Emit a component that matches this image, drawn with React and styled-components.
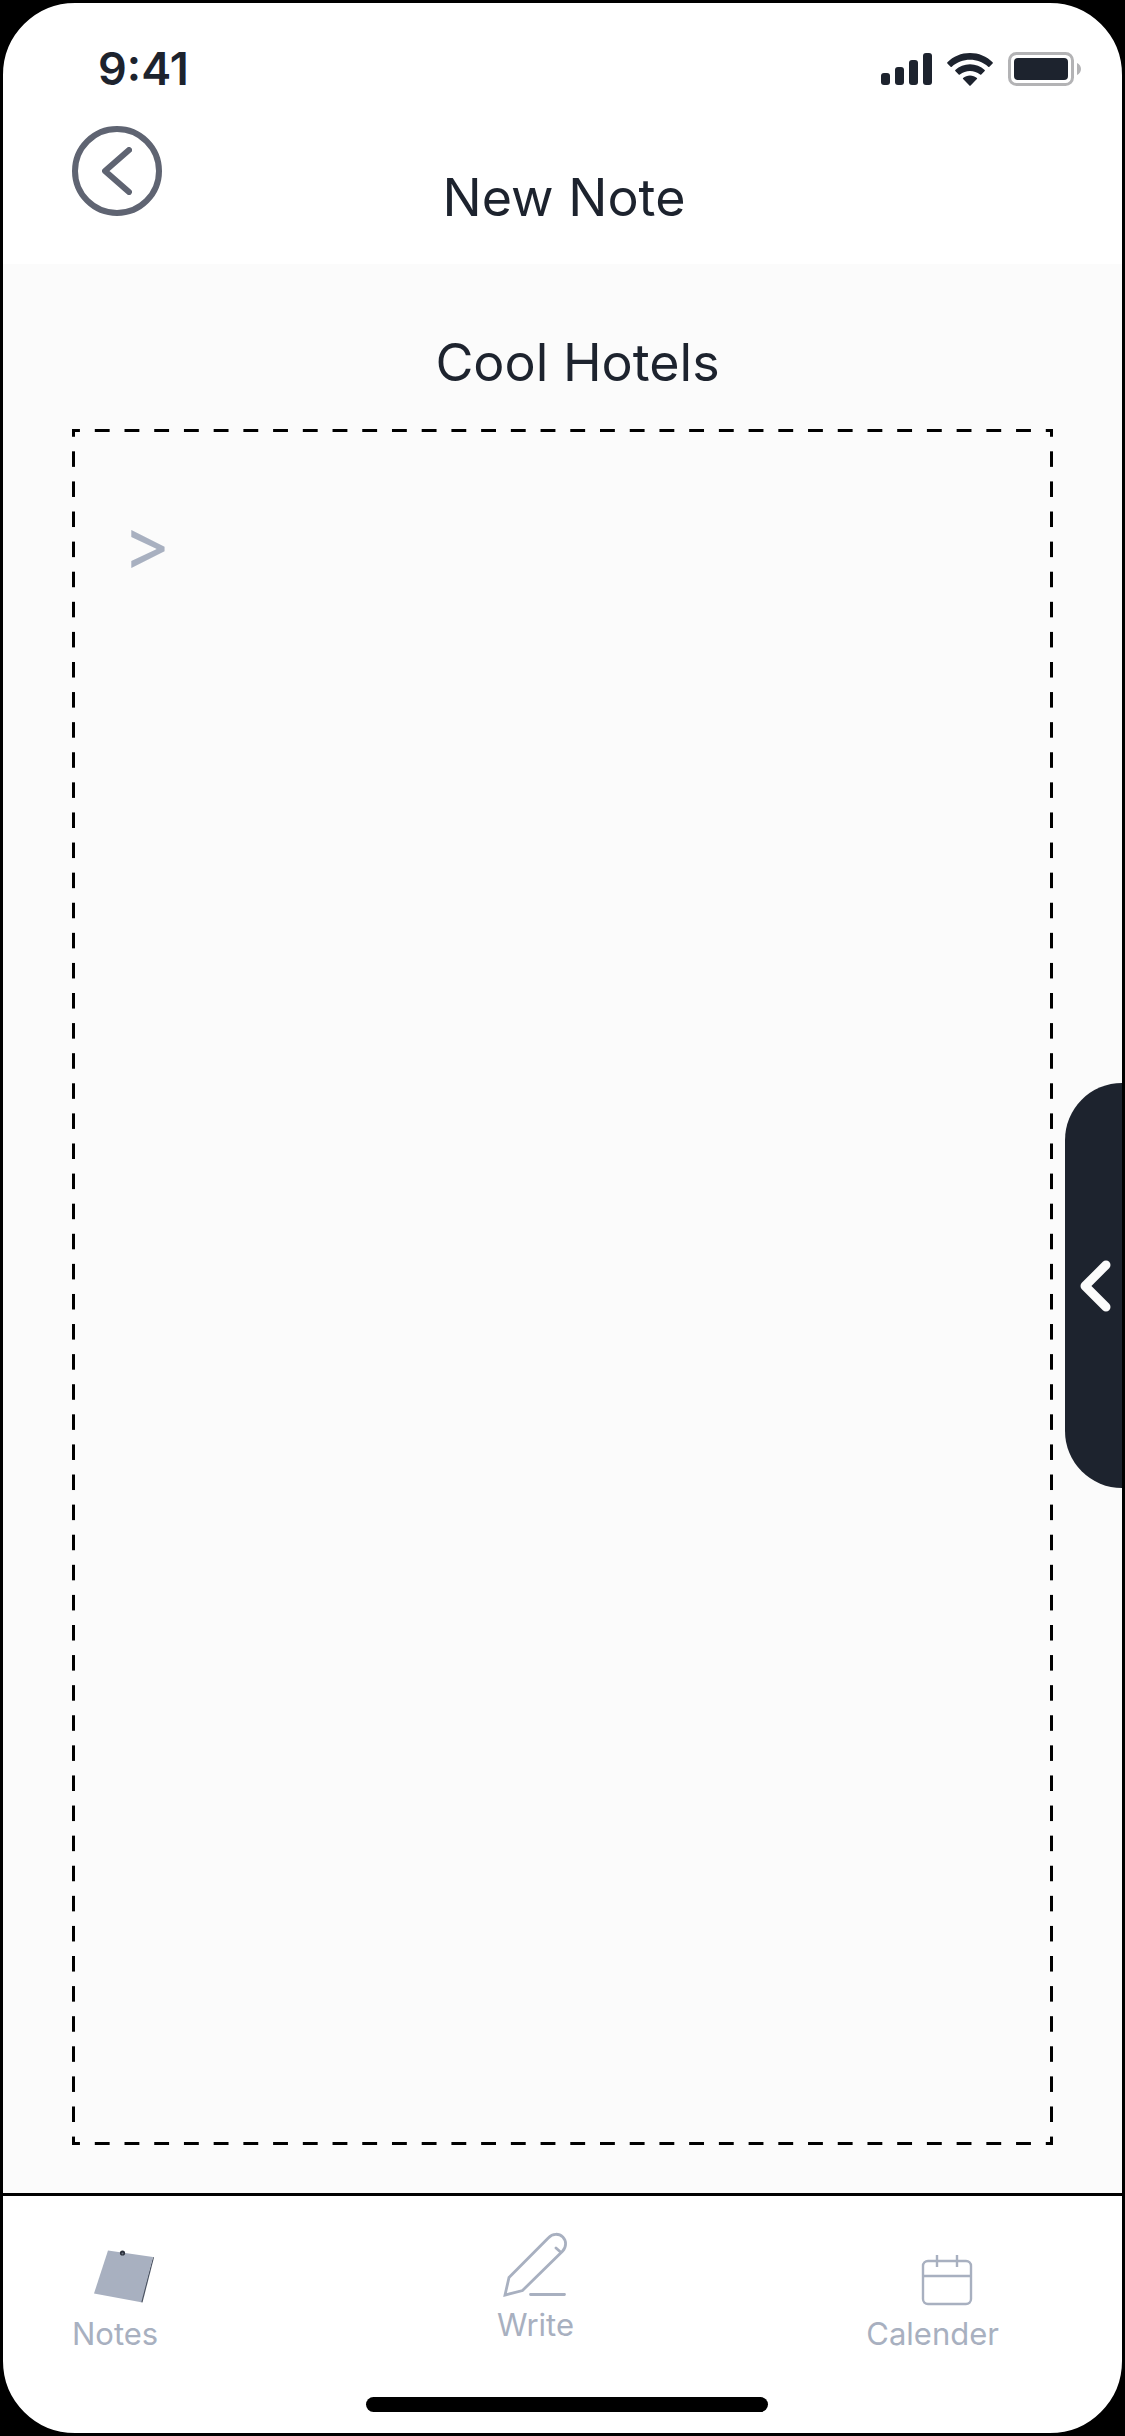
import React from 'react';
import styled, { createGlobalStyle } from 'styled-components';

function SignalIcon() {
  return (
    <svg width="51" height="32" viewBox="0 0 51 32" fill="currentColor" aria-hidden="true">
      <rect x="0" y="20" width="9" height="12" rx="3" />
      <rect x="14" y="14" width="9" height="18" rx="3" />
      <rect x="28" y="7" width="9" height="25" rx="3" />
      <rect x="42" y="0" width="9" height="32" rx="3" />
    </svg>
  );
}

function WifiIcon() {
  return (
    <svg width="46" height="33" viewBox="0 0 46 33" fill="currentColor" aria-hidden="true">
      <path d="M23 0C31.600 0 39.800 3.300 45.600 9.300Q46.100 9.900 45.600 10.400L42.400 13.800Q41.800 14.300 41.200 13.800C36 9 29.700 6.800 23 6.800S10 9 4.800 13.800Q4.200 14.300 3.600 13.800L.4 10.400Q-.1 9.900.4 9.300C6.200 3.300 14.400 0 23 0Z" />
      <path d="M23 11.200C28.600 11.200 33.700 13.300 37.700 17Q38.200 17.600 37.700 18.100L34.300 21.500Q33.700 22 33.100 21.500C30.200 19.200 26.700 17.900 23 17.900S15.800 19.200 12.900 21.500Q12.300 22 11.700 21.500L8.300 18.100Q7.800 17.600 8.300 17C12.300 13.300 17.400 11.200 23 11.200Z" />
      <path d="M23 22.400C25.600 22.400 28 23.300 29.900 24.900Q30.400 25.500 29.900 26L23.600 32.600Q23 33.200 22.400 32.600L16.100 26Q15.600 25.500 16.100 24.900C18 23.300 20.400 22.400 23 22.400Z" />
    </svg>
  );
}

function BatteryIcon() {
  return (
    <svg width="73" height="34" viewBox="0 0 73 34" aria-hidden="true">
      <rect x="1.5" y="1.5" width="63" height="31" rx="7" fill="none" stroke="#b3b3b5" strokeWidth="3" />
      <rect x="6" y="6" width="54" height="22" rx="4" fill="currentColor" />
      <path d="M69 11C71.500 12.200 73 14.500 73 17S71.500 21.800 69 23Z" fill="#b3b3b5" />
    </svg>
  );
}

function NotesIcon() {
  return (
    <svg width="84" height="72" viewBox="0 0 84 72" aria-hidden="true">
      <path d="M80 22L81 22.500 69.500 67.500 67.500 67Z" fill="#4b5362" />
      <path d="M35 15.500L80 22 68.300 67.200 21 58.500Z" fill="#a8b0c0" />
      <circle cx="49.500" cy="18" r="2.600" fill="#2b303b" />
      <circle cx="49.500" cy="18.500" r="1" fill="#6d7482" />
    </svg>
  );
}

function WriteIcon() {
  return (
    <svg width="72" height="72" viewBox="0 0 72 72" fill="none" stroke="currentColor" strokeWidth="2.800" strokeLinecap="round" aria-hidden="true">
      <path d="M6 69L10 51.500 49.500 11.700C53.500 7.200 60 7.300 63.800 11C67.500 14.800 67.600 21 63.500 25.200L23.500 64.500Z" />
      <path d="M57 22L61.500 26M31.500 68.500H65.500" />
    </svg>
  );
}

function CalendarIcon() {
  return (
    <svg width="102" height="72" viewBox="0 0 102 72" fill="none" stroke="currentColor" strokeWidth="2.400" aria-hidden="true">
      <rect x="41" y="26" width="48" height="43" rx="5" />
      <path d="M41 41H89M55 20V32M75 20V32" />
    </svg>
  );
}

function App() {
  return (
    <>
      <GlobalStyle />
      <Screen>
        <Header>
          <StatusBar>
            <Time>9:41</Time>
            <StatusIcons>
              <SignalIcon />
              <WifiIcon />
              <BatteryIcon />
            </StatusIcons>
          </StatusBar>
          <TitleBar>
            <BackButton type="button" aria-label="Back">
              <svg width="30" height="48" viewBox="0 0 30 48" aria-hidden="true">
                <path d="M27 3L3 24 27 45" />
              </svg>
            </BackButton>
            <PageTitle>New Note</PageTitle>
          </TitleBar>
        </Header>

        <Main>
          <NoteTitle id="note-title">Cool Hotels</NoteTitle>
          <NoteArea aria-labelledby="note-title" placeholder=">" />
          <DrawerHandle type="button" aria-label="Open drawer">
            <svg width="33" height="54" viewBox="0 0 33 54" aria-hidden="true">
              <path d="M26 6L5 27 26 48" />
            </svg>
          </DrawerHandle>
        </Main>

        <Footer>
          <TabBar>
            <Tab href="#notes" $align="start">
              <NotesIcon />
              Notes
            </Tab>
            <Tab href="#write" $align="center" $raised>
              <WriteIcon />
              Write
            </Tab>
            <Tab href="#calender" $align="end">
              <CalendarIcon />
              Calender
            </Tab>
          </TabBar>
          <HomeIndicator />
        </Footer>
      </Screen>
    </>
  );
}

const GlobalStyle = createGlobalStyle`
  *, *::before, *::after {
    box-sizing: border-box;
  }

  body {
    margin: 0;
    background: #000;
    color: #1d232e;
    font-family: Inter, 'Liberation Sans', sans-serif;
  }

  button {
    padding: 0;
    cursor: pointer;
  }

  svg {
    display: block;
    flex-shrink: 0;
  }
`;

const Screen = styled.div`
  min-height: 100vh;
  display: flex;
  flex-direction: column;
  overflow: hidden;
  border: 3px solid #000;
  border-radius: 75px;
  background: #fff;
  box-shadow: 0 0 0 75px #000;
`;

const Header = styled.header`
  padding-bottom: 33px;
`;

const StatusBar = styled.div`
  display: flex;
  justify-content: space-between;
  align-items: center;
  padding: 39px 41px 0 95px;
`;

const Time = styled.span`
  font-size: 45px;
  font-weight: 600;
  line-height: 54px;
`;

const StatusIcons = styled.div`
  display: flex;
  align-items: center;
  gap: 15px;
`;

const TitleBar = styled.div`
  display: grid;
  grid-template-columns: 90px 1fr 87px;
  padding: 30px 69px 0;
`;

const BackButton = styled.button`
  width: 90px;
  height: 90px;
  display: flex;
  align-items: center;
  justify-content: center;
  border: 6px solid #5f6472;
  border-radius: 50%;
  background: none;

  path {
    fill: none;
    stroke: #5f6472;
    stroke-width: 6px;
    stroke-linecap: round;
    stroke-linejoin: round;
  }
`;

const PageTitle = styled.h1`
  margin: 39px 0 0;
  font-size: 52px;
  font-weight: 400;
  line-height: 66px;
  text-align: center;
`;

const Main = styled.main`
  position: relative;
  flex: 1;
  display: flex;
  flex-direction: column;
  padding: 66px 69px 48px;
  background: #fbfbfb;
`;

const NoteTitle = styled.h2`
  margin: 0 0 33px;
  padding-left: 30px;
  font-size: 52px;
  font-weight: 400;
  line-height: 66px;
  text-align: center;
`;

/* each tile is half dash, gap, half dash, so the corners always close */
const NoteArea = styled.textarea`
  flex: 1;
  width: 100%;
  padding: 72px 51px;
  border: 0;
  outline: 0;
  resize: none;
  color: #1d232e;
  font-family: inherit;
  font-size: 72px;
  line-height: 84px;
  background-color: transparent;
  background-image:
    linear-gradient(90deg, #000 25%, transparent 25% 75%, #000 75%),
    linear-gradient(90deg, #000 25%, transparent 25% 75%, #000 75%),
    linear-gradient(#000 25%, transparent 25% 75%, #000 75%),
    linear-gradient(#000 25%, transparent 25% 75%, #000 75%);
  background-position: top left, bottom left, top left, top right;
  background-size: 30px 3px, 30px 3px, 3px 30px, 3px 30px;
  background-repeat: round no-repeat, round no-repeat, no-repeat round, no-repeat round;

  &::placeholder {
    color: #a8b0c0;
    opacity: 1;
  }
`;

const DrawerHandle = styled.button`
  position: absolute;
  top: 819px;
  right: 0;
  width: 57px;
  height: 405px;
  display: flex;
  align-items: center;
  justify-content: center;
  padding-left: 6px;
  border: 0;
  border-radius: 57px 0 0 57px;
  background: #1d232e;

  path {
    fill: none;
    stroke: #fbfbfb;
    stroke-width: 9px;
    stroke-linecap: round;
    stroke-linejoin: round;
  }
`;

const Footer = styled.footer`
  padding: 0 0 21px 9px;
  border-top: 3px solid #000;
`;

const TabBar = styled.nav`
  display: grid;
  grid-template-columns: repeat(3, 1fr);
  align-items: end;
  padding: 30px 123px 45px 60px;
`;

const Tab = styled.a`
  justify-self: ${({ $align }) => $align};
  display: flex;
  flex-direction: column;
  align-items: center;
  gap: 9px;
  padding-bottom: ${({ $raised }) => ($raised ? '9px' : '0')};
  color: #a8b0c0;
  font-size: 31px;
  line-height: 36px;
  text-decoration: none;
`;

const HomeIndicator = styled.div`
  width: 402px;
  height: 15px;
  margin: 0 auto;
  border-radius: 8px;
  background: #000;
`;

export default App;
